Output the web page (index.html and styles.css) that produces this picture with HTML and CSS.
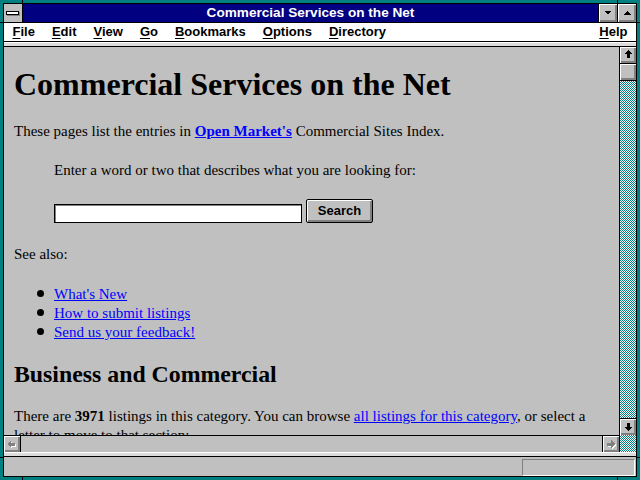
FILE: index.html
```html
<!DOCTYPE html>
<html>
<head>
<meta charset="utf-8">
<title>Commercial Services on the Net</title>
<link rel="stylesheet" href="styles.css">
</head>
<body>
<div class="window">
  <div class="frame">
    <div class="titlebar">
      <div class="sysmenu"><span class="sysbar"></span></div>
      <div class="title">Commercial Services on the Net</div>
      <div class="tbtn"><svg width="18" height="18" viewBox="0 0 18 18" shape-rendering="crispEdges"><polygon points="5.5,7 12.5,7 9,10.5" fill="#000"/></svg></div>
      <div class="tbtn"><svg width="18" height="18" viewBox="0 0 18 18" shape-rendering="crispEdges"><polygon points="5.5,10.5 12.5,10.5 9,7" fill="#000"/></svg></div>
    </div>
    <div class="menubar">
      <span class="mi"><u>F</u>ile</span>
      <span class="mi"><u>E</u>dit</span>
      <span class="mi"><u>V</u>iew</span>
      <span class="mi"><u>G</u>o</span>
      <span class="mi"><u>B</u>ookmarks</span>
      <span class="mi"><u>O</u>ptions</span>
      <span class="mi"><u>D</u>irectory</span>
      <span class="mi help"><u>H</u>elp</span>
    </div>
    <div class="strip"></div>
    <div class="main">
      <div class="content">
        <h1>Commercial Services on the Net</h1>
        <p class="intro">These pages list the entries in <a href="#" class="strong">Open Market's</a> Commercial Sites Index.</p>
        <div class="indent">
          <p class="prompt">Enter a word or two that describes what you are looking for:</p>
          <div class="searchrow">
            <span class="search-input"></span>
            <span class="search-btn">Search</span>
          </div>
        </div>
        <p class="see">See also:</p>
        <ul class="links">
          <li><a href="#">What's New</a></li>
          <li><a href="#">How to submit listings</a></li>
          <li><a href="#">Send us your feedback!</a></li>
        </ul>
        <h2>Business and Commercial</h2>
        <p class="count">There are <b>3971</b> listings in this category. You can browse <a href="#">all listings for this category</a>, or select a letter to move to that section:</p>
      </div>
      <div class="vscroll">
        <div class="sbtn sbtn-up"><svg width="16" height="16" viewBox="0 0 16 16" shape-rendering="crispEdges"><polygon points="8.5,3 12,7 10,7 10,11 7,11 7,7 5,7" fill="#000"/></svg></div>
        <div class="thumb"></div>
        <div class="track"></div>
        <div class="sbtn sbtn-down"><svg width="16" height="16" viewBox="0 0 16 16" shape-rendering="crispEdges"><polygon points="7,4 10,4 10,8 12,8 8.5,12 5,8 7,8" fill="#000"/></svg></div>
      </div>
    </div>
    <div class="hrow">
      <div class="hscroll">
        <div class="hbtn hbtn-left"><svg width="16" height="16" viewBox="0 0 16 16" shape-rendering="crispEdges"><polygon points="4,9 8,5 8,7.5 12,7.5 12,10.5 8,10.5 8,13" fill="#fff"/><polygon points="3,8 7,4 7,6.5 11,6.5 11,9.5 7,9.5 7,12" fill="#808080"/></svg></div>
        <div class="htrack"></div>
        <div class="hbtn hbtn-right"><svg width="16" height="16" viewBox="0 0 16 16" shape-rendering="crispEdges"><polygon points="13,9 9,5 9,7.5 5,7.5 5,10.5 9,10.5 9,13" fill="#fff"/><polygon points="12,8 8,4 8,6.5 4,6.5 4,9.5 8,9.5 8,12" fill="#808080"/></svg></div>
      </div>
      <div class="corner"></div>
    </div>
    <div class="band"></div>
    <div class="status"><div class="sbox"></div></div>
  </div>
</div>
<span class="mark mark-v mark-tl"></span>
<span class="mark mark-v mark-tr"></span>
<span class="mark mark-v mark-bl"></span>
<span class="mark mark-v mark-br"></span>
<span class="mark mark-h mark-lt"></span>
<span class="mark mark-h mark-lb"></span>
<span class="mark mark-h mark-rt"></span>
<span class="mark mark-h mark-rb"></span>
</body>
</html>
```

FILE: styles.css
```css
* { box-sizing: border-box; }
html, body { margin: 0; padding: 0; }
body {
  position: relative;
  width: 640px;
  height: 480px;
  overflow: hidden;
  background: #008080;
  font-family: "Liberation Serif", "Times New Roman", serif;
}
.window {
  width: 640px;
  height: 480px;
  border: 3px solid #008080;
  background: #008080;
}
.frame {
  height: 100%;
  border: 1px solid #000;
  display: flex;
  flex-direction: column;
  background: #c0c0c0;
}

/* title bar */
.titlebar {
  flex: none;
  display: flex;
  height: 19px;
  background: #000080;
  border-bottom: 1px solid #000;
}
.sysmenu {
  width: 19px;
  height: 18px;
  background: #c0c0c0;
  border-right: 1px solid #000;
  display: flex;
  align-items: center;
  justify-content: center;
  padding-right: 1px;
}
.sysbar {
  width: 13px;
  height: 4px;
  background: #fff;
  border: 1px solid #000;
  box-shadow: 1px 1px 0 #808080;
}
.title {
  flex: 1;
  text-align: center;
  color: #fff;
  font-family: "Liberation Sans", Arial, sans-serif;
  font-weight: bold;
  font-size: 13.6px;
  line-height: 18px;
  white-space: nowrap;
}
.tbtn {
  width: 19px;
  height: 18px;
  border-left: 1px solid #000;
  background: #c0c0c0;
  box-shadow: inset 1px 1px 0 #fff, inset -1px -1px 0 #808080, inset -2px -2px 0 #808080;
}
.tbtn svg { display: block; }

/* menu bar */
.menubar {
  flex: none;
  display: flex;
  height: 19px;
  background: #fff;
  border-bottom: 1px solid #000;
  font-family: "Liberation Sans", Arial, sans-serif;
  font-weight: bold;
  font-size: 13px;
  line-height: 18px;
  color: #000;
}
.mi { padding: 0 8.5px; white-space: nowrap; }
.mi u { text-decoration: underline; text-underline-offset: 2px; text-decoration-thickness: 1px; }
.help { margin-left: auto; }

.strip {
  flex: none;
  height: 5px;
  background: #dcdcdc;
  box-shadow: inset 0 1px 0 #fff;
  border-bottom: 1px solid #000;
}

/* main area */
.main {
  flex: 1;
  min-height: 0;
  display: flex;
}
.content {
  flex: 1;
  overflow: hidden;
  padding: 0 10px;
  background: #c0c0c0;
  color: #000;
  font-size: 15px;
  line-height: 19px;
}
.content h1 {
  margin: 19px 0 0;
  font-size: 32px;
  line-height: 36px;
  font-weight: bold;
}
.content p { margin: 0; }
.content a { color: #0000ff; text-decoration: underline; }
.content a.strong { font-weight: bold; }
.intro { margin-top: 20px !important; }
.indent { margin-left: 40px; }
.prompt { margin-top: 20px !important; }
.searchrow {
  margin-top: 19px;
  display: flex;
  align-items: flex-end;
  gap: 4px;
}
.search-input {
  display: block;
  width: 248px;
  height: 19px;
  background: #fff;
  border: 1px solid #000;
  box-shadow: inset 1px 1px 0 #808080;
}
.search-btn {
  display: block;
  width: 67px;
  height: 24px;
  border: 1px solid #000;
  border-radius: 2px;
  background: #c0c0c0;
  box-shadow: inset 1px 1px 0 #fff, inset -1px -1px 0 #808080, inset -2px -2px 0 #808080;
  font-family: "Liberation Sans", Arial, sans-serif;
  font-weight: bold;
  font-size: 13px;
  line-height: 22px;
  text-align: center;
  color: #000;
}
.see { margin-top: 22px !important; }
.links {
  margin: 21px 0 0;
  padding: 0;
  list-style: none;
}
.links li {
  display: flex;
  margin-left: 23px;
}
.links li::before {
  content: "";
  flex: none;
  width: 7px;
  height: 7px;
  margin-top: 5px;
  margin-right: 10px;
  border-radius: 50%;
  background: #000;
}
.content h2 {
  margin: 18px 0 0;
  font-size: 23.8px;
  line-height: 28px;
  font-weight: bold;
}
.count { margin-top: 19px !important; }

/* vertical scrollbar */
.vscroll {
  flex: none;
  width: 17px;
  border-left: 1px solid #000;
  display: flex;
  flex-direction: column;
}
.sbtn, .thumb, .hbtn {
  background: #c0c0c0;
  box-shadow: inset 1px 1px 0 #fff, inset -1px -1px 0 #808080, inset -2px -2px 0 #808080;
}
.sbtn svg, .hbtn svg { display: block; }
.sbtn-up { height: 17px; border-bottom: 1px solid #000; }
.thumb { height: 17px; border-bottom: 1px solid #000; }
.track, .corner {
  background-color: #fff;
  background-image: repeating-conic-gradient(#008080 0 25%, #fff 0 50%);
  background-size: 2px 2px;
}
.track { flex: 1; }
.sbtn-down { height: 17px; border-top: 1px solid #000; }

/* horizontal scrollbar */
.hrow {
  flex: none;
  display: flex;
  height: 17px;
}
.hscroll {
  flex: 1;
  display: flex;
  border-top: 1px solid #000;
  background: #c0c0c0;
}
.hbtn { width: 17px; height: 16px; }
.hbtn-left { border-right: 1px solid #000; }
.hbtn-right { border-left: 1px solid #000; }
.htrack { flex: 1; }
.corner { flex: none; width: 17px; border-left: 1px solid #000; }

.band {
  flex: none;
  height: 5px;
  background: #dcdcdc;
  box-shadow: inset 0 1px 0 #fff;
  border-bottom: 1px solid #000;
}
.status {
  flex: none;
  height: 19px;
  display: flex;
  justify-content: flex-end;
  padding: 2px 1px 0 0;
  background: #c0c0c0;
}
.sbox {
  width: 113px;
  height: 17px;
  border: 1px solid;
  border-color: #808080 #fff #fff #808080;
}

/* window frame resize marks */
.mark { position: absolute; background: #000; }
.mark-v { width: 1px; height: 3px; }
.mark-h { width: 3px; height: 1px; }
.mark-tl { left: 22px; top: 0; }
.mark-tr { left: 617px; top: 0; }
.mark-bl { left: 22px; top: 477px; }
.mark-br { left: 617px; top: 477px; }
.mark-lt { left: 0; top: 22px; }
.mark-lb { left: 0; top: 457px; }
.mark-rt { left: 637px; top: 22px; }
.mark-rb { left: 637px; top: 457px; }
```
